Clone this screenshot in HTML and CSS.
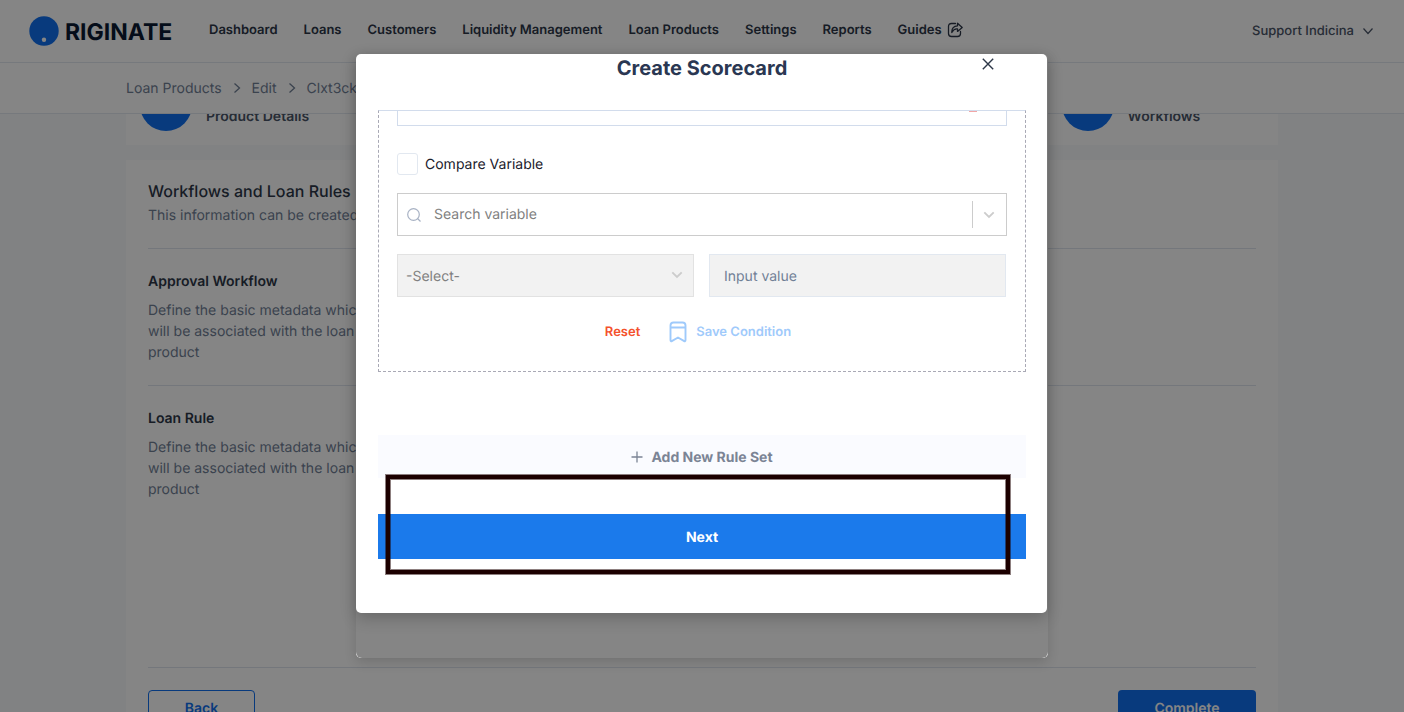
FILE: index.html
```html
<!DOCTYPE html>
<html lang="en">
<head>
<meta charset="utf-8">
<title>Originate</title>
<link rel="stylesheet" href="styles.css">
</head>
<body>
<header class="topbar">
  <a class="brand" href="#">
    <svg class="brand-mark" viewBox="0 0 30 30" aria-hidden="true"><circle cx="15" cy="15" r="14.7" fill="#1070f0"/><circle cx="15" cy="23.8" r="2.2" fill="#fff"/></svg>
    <span class="brand-name">RIGINATE</span>
  </a>
  <nav class="nav">
    <a href="#">Dashboard</a>
    <a href="#">Loans</a>
    <a href="#">Customers</a>
    <a href="#">Liquidity Management</a>
    <a href="#">Loan Products</a>
    <a href="#">Settings</a>
    <a href="#">Reports</a>
    <a class="guides" href="#">Guides
      <svg class="share" viewBox="0 0 16 16" aria-hidden="true"><path d="M8.500 1.500H4.500Q1.500 1.500 1.500 4.500v7q0 3 3 3h6q3 0 3-3V9.500M10.500 1.200l4.700 4.200-4.700 4V7Q7 6.500 4.800 10.500 4.500 4.200 10.500 3.800z" fill="none" stroke="currentColor" stroke-width="1.3" stroke-linejoin="round" stroke-linecap="round"/></svg>
    </a>
  </nav>
  <button class="account" type="button">Support Indicina
    <svg class="caret" viewBox="0 0 12 12" aria-hidden="true"><path d="M1.500 3.500 6 8.500l4.500-5" fill="none" stroke="currentColor" stroke-width="1.2"/></svg>
  </button>
</header>
<nav class="crumbs" aria-label="Breadcrumb">
  <a href="#">Loan Products</a>
  <svg class="crumb-sep" viewBox="0 0 8 12" aria-hidden="true"><path d="M1.500 1.500 6.500 6l-5 4.500" fill="none" stroke="currentColor" stroke-width="1.3"/></svg>
  <a href="#">Edit</a>
  <svg class="crumb-sep" viewBox="0 0 8 12" aria-hidden="true"><path d="M1.500 1.500 6.500 6l-5 4.500" fill="none" stroke="currentColor" stroke-width="1.3"/></svg>
  <a href="#">Clxt3ck</a>
</nav>
<main class="page">
  <section class="steps">
    <div class="step"><span class="step-dot"></span><span class="step-label">Product Details</span></div>
    <div class="step step-last"><span class="step-dot"></span><span class="step-label">Workflows</span></div>
  </section>
  <section class="card">
    <h1 class="card-title">Workflows and Loan Rules</h1>
    <p class="card-sub">This information can be created</p>
    <div class="block">
      <h2 class="block-title">Approval Workflow</h2>
      <p class="block-text">Define the basic metadata which will be associated with the loan product</p>
    </div>
    <div class="block block-tall">
      <h2 class="block-title">Loan Rule</h2>
      <p class="block-text">Define the basic metadata which will be associated with the loan product</p>
    </div>
    <div class="card-actions">
      <button class="btn-back" type="button">Back</button>
      <button class="btn-complete" type="button">Complete</button>
    </div>
  </section>
</main>
<div class="overlay">
  <div class="shell">
    <div class="dialog" role="dialog" aria-labelledby="dialog-title">
      <div class="dialog-head">
        <h2 class="dialog-title" id="dialog-title">Create Scorecard</h2>
        <button class="close" type="button" aria-label="Close">
          <svg viewBox="0 0 12 12" aria-hidden="true"><path d="M.8.8l10.400 10.400M11.200.8.8 11.200" stroke="currentColor" stroke-width="1.4" fill="none"/></svg>
        </button>
      </div>
      <div class="dialog-body">
        <form class="ruleset">
          <div class="cut-field"><span class="cut-mark"></span></div>
          <label class="compare"><input class="check" type="checkbox"><span class="compare-text">Compare Variable</span></label>
          <div class="search">
            <svg class="search-icon" viewBox="0 0 14 14" aria-hidden="true"><circle cx="6.500" cy="6.500" r="5.800" fill="none" stroke="currentColor" stroke-width="1.200"/><path d="M10.500 10.500 13.500 13.500" stroke="currentColor" stroke-width="1.200"/></svg>
            <input class="search-input" type="text" placeholder="Search variable" aria-label="Search variable">
            <span class="search-caret"><svg viewBox="0 0 12 8" aria-hidden="true"><path d="M1.300 1.300 6 6l4.700-4.700" fill="none" stroke="currentColor" stroke-width="1.800"/></svg></span>
          </div>
          <div class="pair">
            <div class="select-wrap">
              <select class="field select" disabled aria-label="Operator"><option>-Select-</option></select>
              <svg class="select-caret" viewBox="0 0 12 8" aria-hidden="true"><path d="M1.300 1.300 6 6l4.700-4.700" fill="none" stroke="currentColor" stroke-width="1.800"/></svg>
            </div>
            <input class="field value" type="text" placeholder="Input value" disabled aria-label="Input value">
          </div>
          <div class="form-actions">
            <button class="reset" type="button">Reset</button>
            <button class="save" type="button">
              <svg class="save-icon" viewBox="0 0 18 22" aria-hidden="true"><path d="M1.500 19V4.500q0-3 3-3h9q3 0 3 3V19q0 2-1.700.9L9 16.500l-5.800 3.400Q1.500 21 1.500 19zM1.500 6.500h15" fill="none" stroke="currentColor" stroke-width="1.900" stroke-linejoin="round"/></svg>
              Save Condition
            </button>
          </div>
        </form>
        <button class="add" type="button">
          <svg class="plus" viewBox="0 0 12 12" aria-hidden="true"><path d="M6 .5v11M.5 6h11" stroke="currentColor" stroke-width="1.300"/></svg>
          Add New Rule Set
        </button>
        <div class="next-row">
          <button class="next" type="button">Next</button>
          <span class="marker"></span>
        </div>
      </div>
    </div>
    <div class="shell-foot"></div>
  </div>
</div>
</body>
</html>
```
FILE: styles.css
```css
* { box-sizing: border-box; }
body {
  margin: 0;
  height: 100vh;
  overflow: hidden;
  display: flex;
  flex-direction: column;
  background: #f7f9fc;
  font-family: Inter, "Liberation Sans", sans-serif;
  font-size: 14px;
  color: #2d3748;
  text-rendering: geometricPrecision;
}
button, input, select { font: inherit; color: inherit; text-rendering: inherit; }
button { border: 0; padding: 0; background: none; display: flex; align-items: center; justify-content: center; }
a { color: inherit; text-decoration: none; }
h1, h2, p { margin: 0; }
svg { display: block; flex: none; }

.topbar {
  flex: none;
  height: 63px;
  padding: 0 30px 0 29px;
  display: flex;
  align-items: center;
  background: #fff;
  border-bottom: 1px solid #e2e8f0;
}
.brand { display: flex; align-items: center; gap: 6px; width: 180px; }
.brand-mark { width: 30px; height: 30px; }
.brand-name { font-size: 23px; line-height: 28px; font-weight: 700; color: #0a1a33; padding-top: 2px; }
.nav { display: flex; gap: 26px; flex: 1; padding-bottom: 3px; font-size: 13px; line-height: 16px; font-weight: 600; color: #2d3748; }
.guides { display: flex; gap: 5px; }
.share { width: 16px; height: 16px; }
.account { gap: 8px; font-size: 13px; font-weight: 500; color: #4a5568; }
.caret { width: 12px; height: 12px; }

.crumbs {
  flex: none;
  height: 51px;
  padding: 0 126px;
  display: flex;
  align-items: center;
  gap: 11px;
  background: #fff;
  border-bottom: 1px solid #e2e8f0;
  font-size: 14px;
  color: #718096;
}
.crumb-sep { width: 8px; height: 12px; }

.page { flex: 1; min-height: 0; overflow: hidden; padding: 0 126px; display: flex; flex-direction: column; gap: 15px; }
.steps {
  flex: none;
  margin-top: -49px;
  padding: 14px 0;
  display: grid;
  grid-template-columns: repeat(5, 1fr);
  background: #fff;
}
.step { display: flex; align-items: center; gap: 14px; padding-left: 14px; font-size: 14px; font-weight: 600; color: #4a5568; }
.step-last { grid-column: 5; }
.step-label { padding-top: 24px; line-height: 20px; }
.step-dot { width: 52px; height: 52px; border-radius: 50%; background: #1070f0; flex: none; }

.card { flex: none; background: #fff; padding: 19px 22px; }
.card-title { font-size: 16px; line-height: 24px; font-weight: 500; color: #2d3748; }
.card-sub { font-size: 14px; line-height: 25px; color: #718096; padding-bottom: 20px; }
.block { border-top: 1px solid #dfe5ee; padding: 22px 0; }
.block-tall { min-height: 282px; }
.block-title { font-size: 14px; line-height: 22px; font-weight: 600; color: #2d3748; margin-bottom: 7px; }
.block-text { width: 220px; font-size: 14px; line-height: 21px; color: #718096; }
.card-actions { border-top: 1px solid #dfe5ee; padding-top: 22px; display: flex; justify-content: space-between; font-size: 14px; font-weight: 600; }
.btn-back { width: 107px; height: 36px; border: 1px solid #1070f0; border-radius: 4px; color: #1070f0; }
.btn-complete { width: 138px; height: 36px; border-radius: 4px; background: #1070f0; color: #fff; }

.overlay {
  position: absolute;
  inset: 0;
  display: flex;
  align-items: center;
  justify-content: center;
  background: rgba(0, 0, 0, 0.48);
}
.shell { width: 692px; border-radius: 5px; background: linear-gradient(#858585 95%, #fff 95%); box-shadow: 0 4px 12px rgba(0, 0, 0, 0.15); }
.shell-foot { height: 45px; background: #858585; border-radius: 0 0 6px 6px; }
.dialog { position: relative; margin-right: 1px; padding: 0 21px 54px 22px; background: #fff; border-radius: 5px; box-shadow: 0 5px 16px rgba(0, 0, 0, 0.22); }
.dialog-head { height: 56px; display: flex; justify-content: center; }
.dialog-title { font-size: 20px; line-height: 28px; font-weight: 700; color: #2a3752; }
.close { position: absolute; top: 4px; right: 53px; width: 12px; height: 12px; color: #2d3748; }
.close svg { width: 12px; height: 12px; }

.ruleset { border: 1px dashed #a9a9b5; border-top: 1px solid #d2dcec; padding: 0 18px 28px; }
.cut-field { height: 15px; border: 1px solid #d2dcec; border-top: 0; display: flex; justify-content: flex-end; padding-right: 29px; }
.cut-mark { width: 8px; height: 1px; background: #f2a6a6; }
.compare { display: flex; align-items: center; gap: 7px; margin: 27px 0 18px; font-size: 14px; line-height: 20px; color: #1a202c; }
.compare-text { padding-top: 2px; }
.check { appearance: none; width: 21px; height: 22px; margin: 0; border: 1px solid #e2e8f0; border-radius: 3px; background: #fff; }
.search { display: flex; align-items: center; height: 43px; border: 1px solid #ccc; padding-left: 9px; }
.search-icon { width: 14px; height: 14px; color: #a8b2c4; }
.search-input { flex: 1; min-width: 0; height: 41px; padding: 0 13px; border: 0; background: none; outline: 0; font-size: 14px; }
.search-input::placeholder { color: #808080; }
.search-caret { height: 27px; width: 34px; padding-right: 2px; border-left: 1px solid #ccc; display: flex; align-items: center; justify-content: center; color: #ccc; }
.search-caret svg { width: 12px; height: 8px; }
.pair { display: grid; grid-template-columns: 1fr 1fr; gap: 15px; margin-top: 18px; padding-right: 1px; }
.select-wrap { position: relative; }
.field { width: 100%; height: 43px; border: 1px solid #e2e2e2; border-radius: 0; background: #f2f2f2; font-size: 14px; opacity: 1; }
.select { appearance: none; padding: 2px 8px 0; color: #808080; }
.select-caret { position: absolute; right: 11px; top: 17px; width: 12px; height: 8px; color: #ccc; pointer-events: none; }
.value { border-color: #e2e8f0; padding: 2px 14px 0; }
.value::placeholder { color: #718096; }
.form-actions { display: flex; justify-content: center; gap: 29px; margin-top: 24px; padding-right: 8px; font-size: 13px; font-weight: 600; }
.reset { color: #f4512c; }
.save { gap: 9px; color: #9fcafb; }
.save-icon { width: 18px; height: 22px; }

.add { width: 100%; height: 43px; margin-top: 63px; padding-top: 1px; gap: 8px; background: #fafbff; color: #7b8495; font-size: 14px; font-weight: 700; }
.plus { width: 12px; height: 12px; }
.next-row { position: relative; margin-top: 36px; }
.next { width: 100%; height: 45px; padding-top: 2px; background: #1b7aeb; color: #fff; font-size: 14px; font-weight: 700; }
.marker { position: absolute; inset: -39px 16px -15px 8px; border: 4px solid #1c0000; outline: 1px solid rgba(28, 0, 0, 0.5); box-shadow: inset 0 0 0 1px rgba(28, 0, 0, 0.5); pointer-events: none; }
```
